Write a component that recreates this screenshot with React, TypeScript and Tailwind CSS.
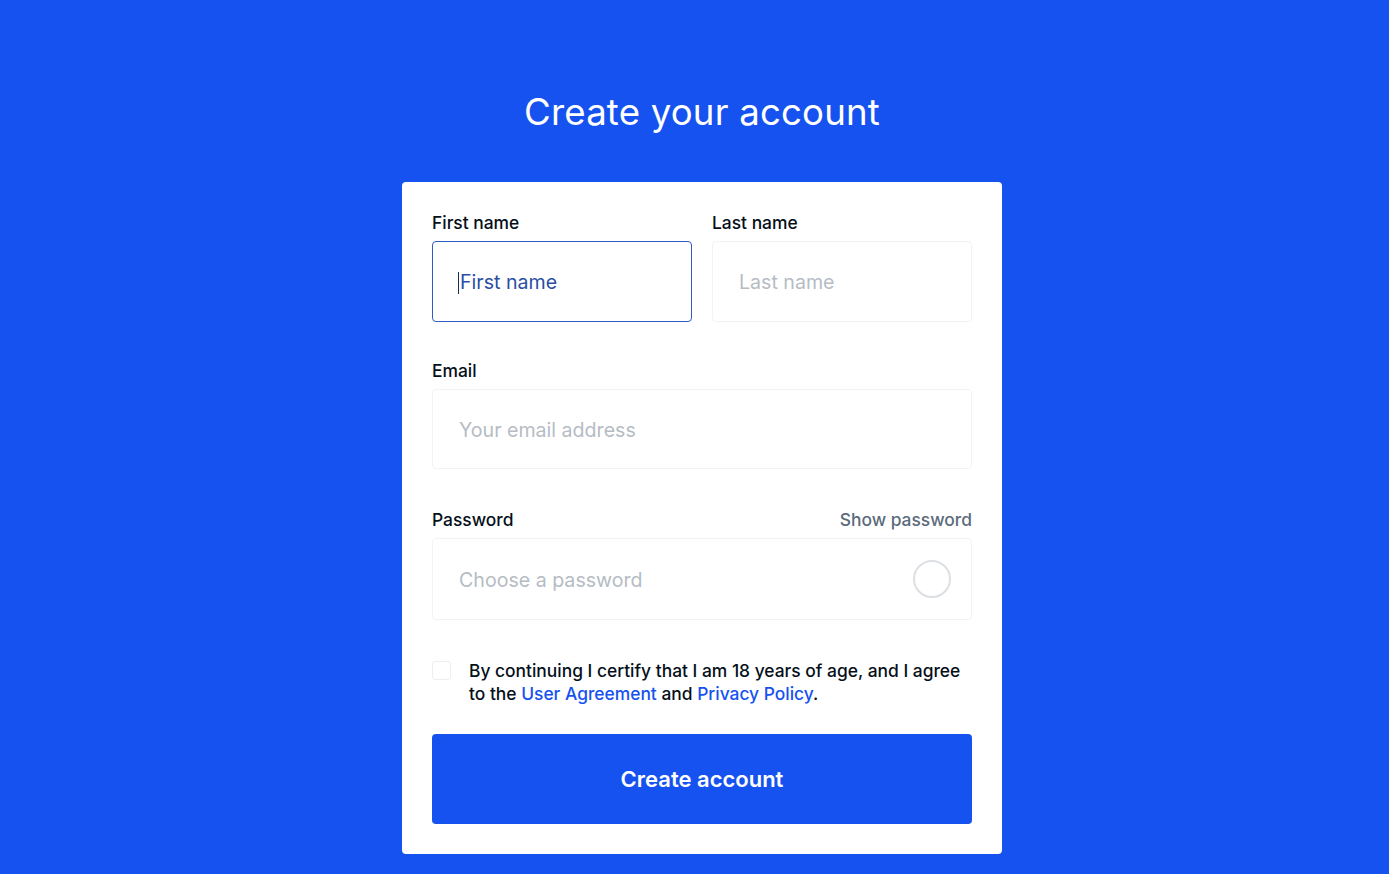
export default function App() {
  return (
    <div
      className="h-screen overflow-hidden w-full bg-[#1652f0] flex flex-col items-center pt-[88px] pl-[15px]"
      style={{ fontFamily: "Inter, 'Noto Sans', sans-serif" }}
    >
      <h1 className="text-white text-[36.6px] leading-[48px] font-normal tracking-[0.2px]">
        Create your account
      </h1>

      <div className="mt-[46px] w-[600px] shrink-0 bg-white rounded-[4px] px-[30px] pt-[29px] pb-[30px]">
        <div className="grid grid-cols-2 gap-[20px]">
          <div>
            <label className="block h-[24px] leading-[24px] text-[17.4px] font-medium text-[#050f19] mb-[6px]">
              First name
            </label>
            <div className="h-[81px] rounded-[4px] border border-[#2f5bc4] flex items-center pl-[25px] pt-[3px]">
              <span className="w-px h-[22px] bg-[#1a2b4c] mr-[1px]" />
              <span className="text-[19.6px] text-[#2a4fa3]">First name</span>
            </div>
          </div>
          <div>
            <label className="block h-[24px] leading-[24px] text-[17.4px] font-medium text-[#050f19] mb-[6px]">
              Last name
            </label>
            <div className="h-[81px] rounded-[4px] border border-[#f1f3f5] flex items-center px-[26px] pt-[3px]">
              <span className="text-[19.6px] text-[#b6bcc4]">Last name</span>
            </div>
          </div>
        </div>

        <label className="block mt-[37px] h-[24px] leading-[24px] text-[17.4px] font-medium text-[#050f19] mb-[6px]">
          Email
        </label>
        <div className="h-[80px] rounded-[4px] border border-[#f1f3f5] flex items-center px-[26px] pt-[3px]">
          <span className="text-[19.6px] text-[#b6bcc4]">Your email address</span>
        </div>

        <div className="mt-[39px] mb-[6px] h-[24px] flex items-center justify-between">
          <span className="text-[17.4px] font-medium text-[#050f19]">Password</span>
          <span className="text-[17.4px] font-medium text-[#5b6b7c]">Show password</span>
        </div>
        <div className="h-[82px] rounded-[4px] border border-[#f1f3f5] flex items-center justify-between pl-[26px] pr-[20px]">
          <span className="text-[19.6px] text-[#b6bcc4] pt-[3px]">Choose a password</span>
          <span className="w-[38px] h-[38px] rounded-full border-2 border-[#dcdfe3]" />
        </div>

        <div className="mt-[39px] flex items-start gap-[18px]">
          <span className="mt-[2px] w-[19px] h-[19px] shrink-0 rounded-[3px] border border-[#eceef1]" />
          <p className="text-[17.4px] leading-[23px] font-medium text-[#050f19]">
            By continuing I certify that I am 18 years of age, and I agree
            <br />
            to the <span className="text-[#1652f0]">User Agreement</span> and{" "}
            <span className="text-[#1652f0]">Privacy Policy</span>.
          </p>
        </div>

        <button
          type="button"
          className="mt-[29px] w-full h-[90px] rounded-[4px] bg-[#1652f0] text-white text-[22px] font-semibold"
        >
          Create account
        </button>
      </div>
    </div>
  );
}
